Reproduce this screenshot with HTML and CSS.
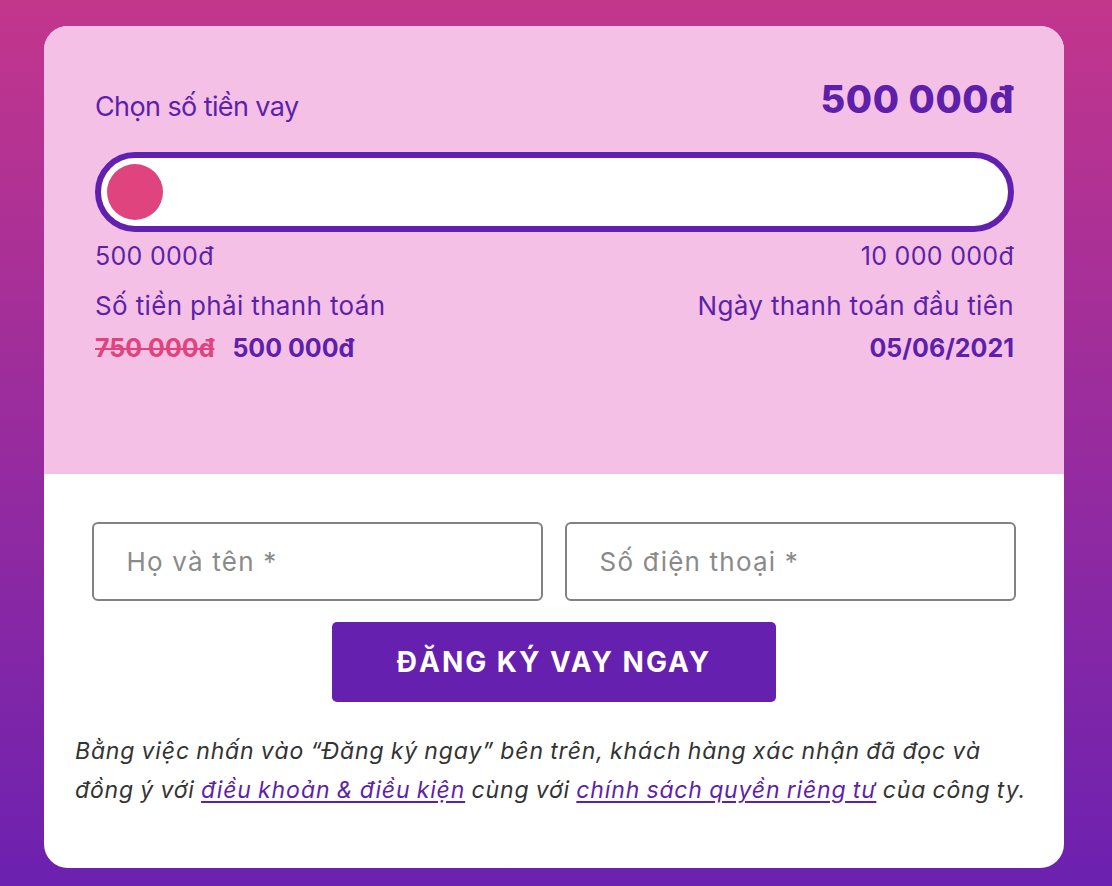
FILE: index.html
```html
<!DOCTYPE html>
<html lang="vi">
<head>
<meta charset="utf-8">
<title>Đăng ký vay</title>
<link rel="stylesheet" href="styles.css">
</head>
<body>
<div class="card">
  <section class="calc">
    <div class="title-row">
      <span class="label">Chọn số tiền vay</span>
      <span class="amount">500 000đ</span>
    </div>
    <div class="slider">
      <span class="thumb"></span>
    </div>
    <div class="range-row">
      <span class="range">500 000đ</span>
      <span class="range">10 000 000đ</span>
    </div>
    <div class="info-row">
      <div class="info">
        <div class="label">Số tiền phải thanh toán</div>
        <div class="values"><span class="old">750 000đ</span><span class="val">500 000đ</span></div>
      </div>
      <div class="info right">
        <div class="label">Ngày thanh toán đầu tiên</div>
        <div class="values"><span class="val">05/06/2021</span></div>
      </div>
    </div>
  </section>
  <section class="form">
    <div class="inputs">
      <input class="field" type="text" placeholder="Họ và tên *">
      <input class="field" type="text" placeholder="Số điện thoại *">
    </div>
    <button class="submit" type="button">ĐĂNG KÝ VAY NGAY</button>
    <p class="note">Bằng việc nhấn vào “Đăng ký ngay” bên trên, khách hàng xác nhận đã đọc và đồng ý với <a href="#">điều khoản &amp; điều kiện</a> cùng với <a href="#">chính sách quyền riêng tư</a> của công ty.</p>
  </section>
</div>
</body>
</html>
```
FILE: styles.css
```css
html, body {
  margin: 0;
  padding: 0;
}
body {
  width: 1112px;
  height: 886px;
  overflow: hidden;
  background: linear-gradient(180deg, #c3368c 0%, #6c21b0 100%);
  font-family: Inter, "Noto Sans", sans-serif;
  color: #5e1fab;
}
.card {
  margin: 26px 0 0 44px;
  width: 1020px;
  height: 842px;
  border-radius: 24px;
  overflow: hidden;
  background: #ffffff;
  display: flex;
  flex-direction: column;
}
.calc {
  background: #f4c0e6;
  height: 448px;
  box-sizing: border-box;
  padding: 56px 50px 0 51px;
}
.title-row {
  display: flex;
  justify-content: space-between;
  align-items: baseline;
  height: 40px;
}
.label {
  font-size: 26px;
  line-height: 40px;
  letter-spacing: 0.35px;
  color: #5e1fab;
}
.title-row .label {
  font-size: 27px;
  letter-spacing: -0.6px;
}
.amount {
  font-size: 38px;
  line-height: 40px;
  font-weight: 800;
  letter-spacing: 0.6px;
  color: #5e1fab;
  position: relative;
  top: -3px;
}
.slider {
  margin-top: 30px;
  height: 80px;
  box-sizing: border-box;
  border: 6px solid #6220b0;
  border-radius: 40px;
  background: #ffffff;
  padding: 6px;
  display: flex;
}
.thumb {
  width: 56px;
  height: 56px;
  border-radius: 50%;
  background: #e0447f;
}
.range-row {
  display: flex;
  justify-content: space-between;
  margin-top: 4px;
}
.range {
  font-size: 25px;
  line-height: 40px;
  letter-spacing: 0.3px;
}
.info-row {
  display: flex;
  justify-content: space-between;
  margin-top: 10px;
}
.info.right {
  text-align: right;
}
.values {
  display: flex;
  gap: 18px;
  justify-content: flex-start;
  margin-top: 2px;
}
.info.right .values {
  justify-content: flex-end;
}
.old, .val {
  font-size: 25px;
  line-height: 40px;
  font-weight: 700;
  letter-spacing: 0;
}
.old {
  color: #e0447f;
  text-decoration: line-through;
  text-decoration-thickness: 2px;
}
.val {
  color: #5e1fab;
}
.form {
  flex: 1;
  padding: 48px 0 0 0;
  display: flex;
  flex-direction: column;
  align-items: center;
}
.inputs {
  display: flex;
  gap: 22px;
  margin-left: -1px;
}
.field {
  width: 451px;
  height: 79px;
  box-sizing: border-box;
  border: 2px solid #828282;
  border-radius: 6px;
  padding: 0 33px;
  font-family: Inter, "Noto Sans", sans-serif;
  font-size: 26px;
  letter-spacing: 1.2px;
  color: #333;
  background: #fff;
  outline: none;
}
.field::placeholder {
  color: #8a8a8a;
}
.submit {
  margin-top: 21px;
  width: 444px;
  height: 80px;
  border: 0;
  border-radius: 5px;
  background: #6520b0;
  color: #ffffff;
  font-family: Inter, "Noto Sans", sans-serif;
  font-size: 28px;
  font-weight: 700;
  letter-spacing: 2px;
  padding: 0;
}
.note {
  align-self: stretch;
  margin: 30px 0 0 0;
  padding: 0 26px 0 31px;
  font-size: 23px;
  line-height: 39px;
  font-style: italic;
  letter-spacing: 0.85px;
  word-spacing: -1px;
  color: #333333;
}
.note a {
  color: #5e1fab;
  text-decoration: underline;
  text-underline-offset: 3px;
}
```
